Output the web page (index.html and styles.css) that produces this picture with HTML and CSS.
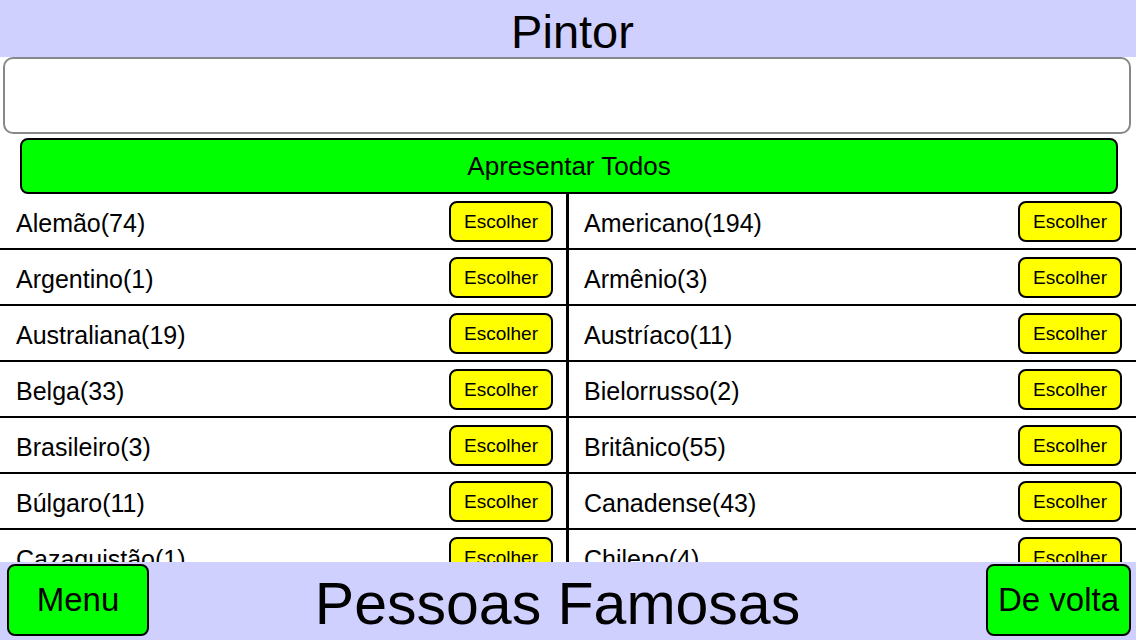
FILE: index.html
```html
<!DOCTYPE html>
<html lang="pt">
<head>
  <meta charset="UTF-8" />
  <meta name="viewport" content="width=device-width, initial-scale=1.0"/>
  <title>Pintor</title>
  <link rel="stylesheet" href="styles.css">
</head>
<body>

  <div class="header">Pintor</div>

  <input class="search" type="text">

  <button class="show-all" type="button">Apresentar Todos</button>

  <div class="list">
    <div class="cell left"><span>Alemão(74)</span><button class="pick">Escolher</button></div>
    <div class="cell"><span>Americano(194)</span><button class="pick">Escolher</button></div>
    <div class="cell left"><span>Argentino(1)</span><button class="pick">Escolher</button></div>
    <div class="cell"><span>Armênio(3)</span><button class="pick">Escolher</button></div>
    <div class="cell left"><span>Australiana(19)</span><button class="pick">Escolher</button></div>
    <div class="cell"><span>Austríaco(11)</span><button class="pick">Escolher</button></div>
    <div class="cell left"><span>Belga(33)</span><button class="pick">Escolher</button></div>
    <div class="cell"><span>Bielorrusso(2)</span><button class="pick">Escolher</button></div>
    <div class="cell left"><span>Brasileiro(3)</span><button class="pick">Escolher</button></div>
    <div class="cell"><span>Britânico(55)</span><button class="pick">Escolher</button></div>
    <div class="cell left"><span>Búlgaro(11)</span><button class="pick">Escolher</button></div>
    <div class="cell"><span>Canadense(43)</span><button class="pick">Escolher</button></div>
    <div class="cell left"><span>Cazaquistão(1)</span><button class="pick">Escolher</button></div>
    <div class="cell"><span>Chileno(4)</span><button class="pick">Escolher</button></div>
  </div>

  <div class="footer">
    <button class="nav-btn menu">Menu</button>
    <div class="footer-title">Pessoas Famosas</div>
    <button class="nav-btn back">De volta</button>
  </div>

</body>
</html>
```

FILE: styles.css
```css
* {
  box-sizing: border-box;
}

body {
  font-family: "Liberation Sans", Arial, sans-serif;
  background-color: white;
  color: black;
  margin: 0;
  padding: 0;
  height: 640px;
  display: flex;
  flex-direction: column;
  overflow: hidden;
}

button {
  font-family: "Liberation Sans", Arial, sans-serif;
  color: black;
  cursor: pointer;
  padding: 0;
}

.header {
  height: 57px;
  flex-shrink: 0;
  background: #d0d0ff;
  font-size: 47px;
  line-height: 63px;
  text-align: center;
  padding-left: 9px;
}

.search {
  height: 77px;
  flex-shrink: 0;
  margin: 0 5px 0 3px;
  border: 2px solid #888;
  border-radius: 10px;
  background: white;
  outline: none;
}

.show-all {
  height: 56px;
  flex-shrink: 0;
  margin: 4px 18px 0 20px;
  background: #00ff00;
  border: 2px solid black;
  border-radius: 8px;
  font-size: 26px;
}

.list {
  flex: 1;
  overflow: hidden;
  display: grid;
  grid-template-columns: 569px 1fr;
  grid-auto-rows: 56px;
  align-content: start;
}

.cell {
  display: flex;
  align-items: center;
  justify-content: space-between;
  border-bottom: 2px solid black;
  padding: 0 14px 0 15px;
  font-size: 25px;
}

.cell span {
  padding-top: 4px;
}

.cell.left {
  border-right: 3px solid black;
  padding: 0 13px 0 16px;
}

.pick {
  width: 104px;
  height: 41px;
  background: #ffff00;
  border: 2px solid black;
  border-radius: 8px;
  font-size: 19px;
  padding-top: 2px;
}

.footer {
  height: 78px;
  flex-shrink: 0;
  background: #d0d0ff;
  display: flex;
  align-items: flex-start;
  padding: 2px 5px 0 7px;
}

.nav-btn {
  height: 72px;
  background: #00ff00;
  border: 2px solid black;
  border-radius: 8px;
  font-size: 33px;
}

.menu {
  width: 142px;
}

.back {
  width: 145px;
}

.footer-title {
  flex: 1;
  text-align: center;
  font-size: 59px;
  line-height: 80px;
  padding-right: 20px;
}
```
